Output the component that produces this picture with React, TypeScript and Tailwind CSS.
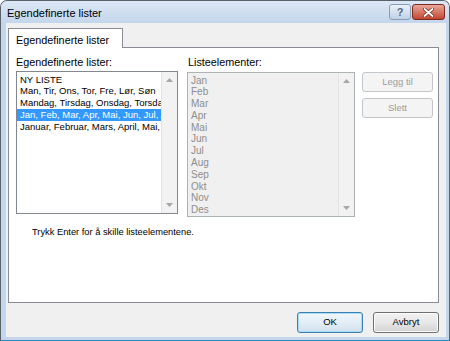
import React from "react";

const UpArrow = () => (
  <svg width="7" height="4" viewBox="0 0 7 4">
    <path d="M0 4 L3.5 0 L7 4 Z" fill="#a6a6a6" />
  </svg>
);
const DownArrow = () => (
  <svg width="7" height="4" viewBox="0 0 7 4">
    <path d="M0 0 L3.5 4 L7 0 Z" fill="#a6a6a6" />
  </svg>
);

function ScrollBar() {
  return (
    <div className="w-[16px] h-full shrink-0 flex flex-col justify-between items-center bg-[#f2f2f2] border-l border-[#e4e4e4]">
      <div className="h-[16px] w-full flex items-center justify-center">
        <UpArrow />
      </div>
      <div className="h-[16px] w-full flex items-center justify-center">
        <DownArrow />
      </div>
    </div>
  );
}

const list1 = [
  "NY LISTE",
  "Man, Tir, Ons, Tor, Fre, Lør, Søn",
  "Mandag, Tirsdag, Onsdag, Torsdag, Fredag, Lørdag, Søndag",
  "Jan, Feb, Mar, Apr, Mai, Jun, Jul, Aug, Sep, Okt, Nov, Des",
  "Januar, Februar, Mars, April, Mai, Juni, Juli, August, September, Oktober, November, Desember",
];

const list2 = ["Jan", "Feb", "Mar", "Apr", "Mai", "Jun", "Jul", "Aug", "Sep", "Okt", "Nov", "Des"];

export default function App() {
  return (
    <div className="w-[450px] h-[341px] flex flex-col bg-[#c4d6ec] border border-[#59616b] border-b-[#2f86bd] rounded-t-[7px] overflow-hidden font-['Liberation_Sans',Arial,sans-serif] text-black">
      <div className="h-[22px] shrink-0 flex items-start pl-[6px] pr-[4px] bg-gradient-to-b from-[#dbe7f5] to-[#c4d6ec]">
        <span className="text-[11px] leading-[13px] mt-[6px]">Egendefinerte lister</span>
        <div className="ml-auto mt-[3px] flex gap-[1px]">
          <div className="w-[22px] h-[16px] rounded-[3px] border border-[#8a9db5] bg-gradient-to-b from-[#eaf1f9] to-[#bfd1e6] flex items-center justify-center">
            <span className="text-[11px] leading-[11px] font-bold text-[#56677d]">?</span>
          </div>
          <div className="w-[33px] h-[16px] rounded-[3px] border border-[#7b2b20] bg-gradient-to-b from-[#e8a598] to-[#c24530] flex items-center justify-center">
            <svg width="11" height="9" viewBox="0 0 11 9">
              <path d="M1.5 1 L9.5 8 M9.5 1 L1.5 8" stroke="#6d2a22" strokeWidth="3.2" strokeLinecap="round" />
              <path d="M1.5 1 L9.5 8 M9.5 1 L1.5 8" stroke="#ffffff" strokeWidth="1.8" strokeLinecap="round" />
            </svg>
          </div>
        </div>
      </div>
      <div className="flex-1 ml-[5px] mr-[3px] mb-[3px] bg-[#f0f0f0] flex flex-col pt-[5px] pl-[2px] pr-[7px] pb-[4px]">
        <div className="flex">
          <div className="relative z-10 -mb-px w-[115px] h-[20px] bg-white border border-b-0 border-[#898c95] pl-[7px] pt-[5px] text-[10.8px] leading-[13px]">
            Egendefinerte lister
          </div>
        </div>
        <div className="h-[256px] shrink-0 bg-white border border-[#898c95] flex flex-col pt-[8px]">
          <div className="flex pl-[7px]">
            <div className="w-[162px] flex flex-col">
              <div className="h-[15px] text-[10.8px] leading-[13px]">Egendefinerte lister:</div>
              <div className="h-[143px] border border-[#828790] bg-white flex">
                <div className="flex-1 overflow-hidden pt-[1.5px]">
                  {list1.map((t, i) => (
                    <div
                      key={i}
                      className={
                        i === 3
                          ? "h-[11.8px] leading-[11.8px] whitespace-nowrap pl-[3px] text-[9.5px] bg-[#3399ff] text-white"
                          : "h-[11.8px] leading-[11.8px] whitespace-nowrap pl-[3px] text-[9.5px] text-black"
                      }
                    >
                      {t}
                    </div>
                  ))}
                </div>
                <ScrollBar />
              </div>
            </div>
            <div className="w-[168px] ml-[9px] flex flex-col">
              <div className="h-[16px] pl-[1px] text-[10.8px] leading-[13px]">Listeelementer:</div>
              <div className="h-[145px] border border-[#adb2b5] bg-[#f0f0f0] flex">
                <div className="flex-1 overflow-hidden pt-[1.5px]">
                  {list2.map((t, i) => (
                    <div key={i} className="h-[11.8px] leading-[11.8px] whitespace-nowrap pl-[3px] text-[10px] text-[#8e8e8e]">
                      {t}
                    </div>
                  ))}
                </div>
                <ScrollBar />
              </div>
            </div>
            <div className="w-[71px] ml-[7px] flex flex-col pt-[16px]">
              <div className="h-[20px] rounded-[3px] border border-[#c2c5c9] bg-[#f4f4f4] flex items-center justify-center text-[9.5px] text-[#9c9c9c]">
                Legg til
              </div>
              <div className="h-[20px] mt-[6px] rounded-[3px] border border-[#c2c5c9] bg-[#f4f4f4] flex items-center justify-center text-[9.5px] text-[#9c9c9c]">
                Slett
              </div>
            </div>
          </div>
          <div className="mt-[8px] pl-[23px] text-[9.3px] leading-[14px]">Trykk Enter for å skille listeelementene.</div>
        </div>
        <div className="flex justify-end gap-[10px] mt-[9px]">
          <div className="w-[66px] h-[21px] rounded-[3px] border border-[#3c7fb1] bg-gradient-to-b from-[#f0f7fc] via-[#e3eef7] to-[#cfe1ee] shadow-[inset_0_0_0_1px_#a8dcf5] flex items-center justify-center text-[9.5px]">
            OK
          </div>
          <div className="w-[66px] h-[21px] rounded-[3px] border border-[#707070] bg-gradient-to-b from-[#f2f2f2] via-[#e8e8e8] to-[#d2d2d2] shadow-[inset_0_0_0_1px_#fbfbfb] flex items-center justify-center text-[9.5px]">
            Avbryt
          </div>
        </div>
      </div>
    </div>
  );
}
